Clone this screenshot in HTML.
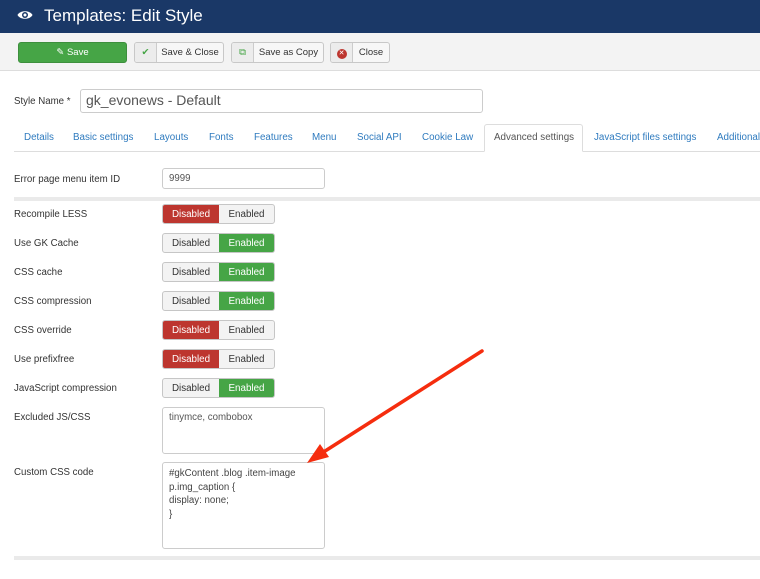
<!DOCTYPE html>
<html><head><meta charset="utf-8"><style>
*{box-sizing:border-box;margin:0;padding:0}
body{width:760px;height:579px;overflow:hidden;background:#fff;font-family:"Liberation Sans",sans-serif;font-size:10px;color:#333;position:relative}
.hdr{position:absolute;left:0;top:0;width:760px;height:33px;background:#1a3867;color:#fff;font-size:17px}
.hdr span{position:absolute;left:44px;top:6px}
.tb{position:absolute;left:0;top:33px;width:760px;height:38px;background:#f3f3f3;border-bottom:1px solid #ddd}
.btn{position:absolute;top:9px;height:21px;border:1px solid #c8c8c8;border-radius:3px;background:#f7f7f7;font-size:9.5px;line-height:19px;color:#333;overflow:hidden}
.btn .ic{position:absolute;left:0;top:0;width:22px;height:19px;border-right:1px solid #ccc;background:#ececec;text-align:center}
.btn .t{position:absolute;left:22px;right:0;text-align:center}
.abs{position:absolute}
.lbl{position:absolute;left:14px;font-size:9.7px;color:#333}
.inp{position:absolute;border:1px solid #ccc;border-radius:3px;background:#fff;font-size:9.7px;color:#555;padding:4px 6px}
.tog{position:absolute;left:162px;width:113px;height:20px;border:1px solid #c6c6c6;border-radius:3px;overflow:hidden;font-size:9.8px;line-height:19px;background:#f3f3f3}
.tog div{position:absolute;top:0;height:18px;text-align:center;color:#333}
.tog .d{left:0;width:56px}.tog .e{left:56px;width:55px}
.red{background:#bd362f;color:#fff!important}.grn{background:#46a546;color:#fff!important}
.tabs a{position:absolute;top:132px;color:#2f7bbf;font-size:9.8px;text-decoration:none}
.sep{position:absolute;left:14px;right:0;height:4px;background:#eaeaea}
</style></head><body>
<div class="hdr"><svg class="abs" style="left:17px;top:9px" width="16" height="12" viewBox="0 0 16 12"><path d="M0.5 6C3 1 13 1 15.5 6C13 11 3 11 0.5 6Z" fill="#fff"/><circle cx="8" cy="6" r="3" fill="#1a3867"/><circle cx="8" cy="6" r="1.5" fill="#fff"/></svg><span>Templates: Edit Style</span></div>
<div class="tb">
<div class="btn" style="left:18px;width:109px;background:#46a546;border-color:#3d8f3d;color:#fff;text-align:center">&#9998; Save</div>
<div class="btn" style="left:134px;width:90px"><div class="ic" style="color:#46a546">&#10004;</div><div class="t">Save &amp; Close</div></div>
<div class="btn" style="left:231px;width:93px"><div class="ic" style="color:#46a546">&#10697;</div><div class="t">Save as Copy</div></div>
<div class="btn" style="left:330px;width:60px"><div class="ic"><span style="display:inline-block;width:10px;height:10px;border-radius:50%;background:#bd362f;color:#fff;font-size:7px;line-height:10px;margin-top:4px">&#10005;</span></div><div class="t">Close</div></div>
</div>
<div class="lbl" style="top:96px">Style Name *</div>
<div class="inp" style="left:80px;top:89px;width:403px;height:24px;font-size:14px;padding:2px 5px;color:#555">gk_evonews - Default</div>
<div class="abs" style="left:14px;right:0;top:151px;border-top:1px solid #ddd"></div>
<div class="abs" style="left:484px;top:124px;width:99px;height:28px;border:1px solid #ddd;border-bottom:1px solid #fff;border-radius:3px 3px 0 0;background:#fff"></div>
<div class="tabs">
<a style="left:24px">Details</a><a style="left:73px">Basic settings</a><a style="left:154px">Layouts</a><a style="left:209px">Fonts</a><a style="left:254px">Features</a><a style="left:312px">Menu</a><a style="left:357px">Social API</a><a style="left:422px">Cookie Law</a><a style="left:494px;color:#555">Advanced settings</a><a style="left:594px">JavaScript files settings</a><a style="left:717px">Additional</a>
</div>
<div class="lbl" style="top:174px">Error page menu item ID</div>
<div class="inp" style="left:162px;top:168px;width:163px;height:21px">9999</div>
<div class="sep" style="top:197px"></div>
<div class="lbl" style="top:209px">Recompile LESS</div>
<div class="tog" style="top:204px"><div class="d red">Disabled</div><div class="e">Enabled</div></div>
<div class="lbl" style="top:238px">Use GK Cache</div>
<div class="tog" style="top:233px"><div class="d">Disabled</div><div class="e grn">Enabled</div></div>
<div class="lbl" style="top:267px">CSS cache</div>
<div class="tog" style="top:262px"><div class="d">Disabled</div><div class="e grn">Enabled</div></div>
<div class="lbl" style="top:296px">CSS compression</div>
<div class="tog" style="top:291px"><div class="d">Disabled</div><div class="e grn">Enabled</div></div>
<div class="lbl" style="top:325px">CSS override</div>
<div class="tog" style="top:320px"><div class="d red">Disabled</div><div class="e">Enabled</div></div>
<div class="lbl" style="top:354px">Use prefixfree</div>
<div class="tog" style="top:349px"><div class="d red">Disabled</div><div class="e">Enabled</div></div>
<div class="lbl" style="top:383px">JavaScript compression</div>
<div class="tog" style="top:378px"><div class="d">Disabled</div><div class="e grn">Enabled</div></div>
<div class="lbl" style="top:412px">Excluded JS/CSS</div>
<div class="inp" style="left:162px;top:407px;width:163px;height:47px">tinymce, combobox</div>
<div class="lbl" style="top:467px">Custom CSS code</div>
<div class="inp" style="left:162px;top:462px;width:163px;height:87px;line-height:13.5px;color:#444">#gkContent .blog .item-image p.img_caption {<br>display: none;<br>}</div>
<div class="sep" style="top:556px"></div>
<svg class="abs" style="left:0;top:0" width="760" height="579"><line x1="482" y1="351" x2="322" y2="453" stroke="#f52d0e" stroke-width="3.5" stroke-linecap="round"/><polygon points="307,463 329,457 320,444" fill="#f52d0e"/></svg>
</body></html>
